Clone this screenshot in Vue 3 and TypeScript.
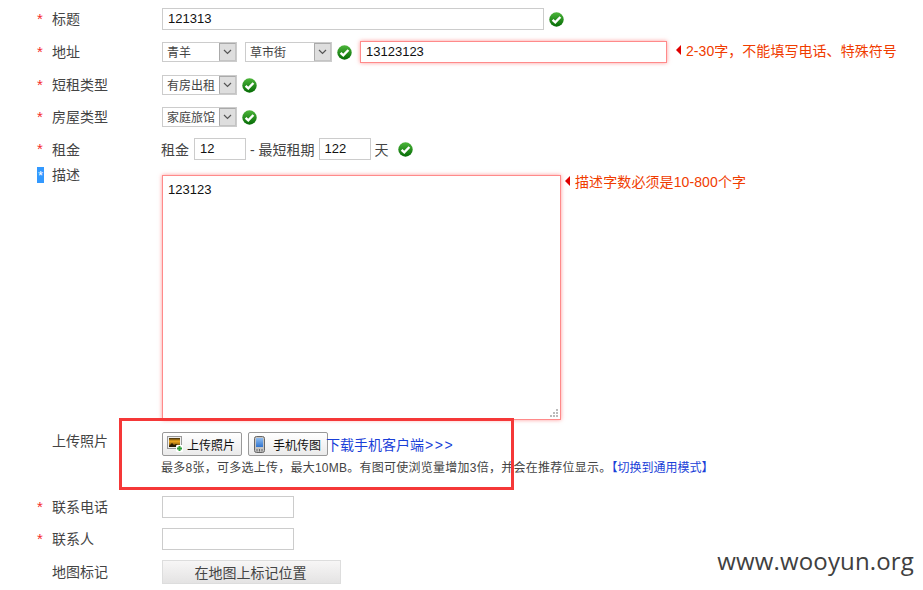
<script setup lang="ts">
const dots: [number, number][] = [
  [6, 0],
  [3, 3],
  [6, 3],
  [0, 6],
  [3, 6],
  [6, 6],
];
</script>

<template>
  <div class="page">
    <svg width="0" height="0" class="defs">
      <defs>
        <linearGradient id="okg" x1="0" y1="0" x2="0" y2="1">
          <stop offset="0" stop-color="#4cb53a" />
          <stop offset="1" stop-color="#056b05" />
        </linearGradient>
        <linearGradient id="scr" x1="0" y1="0" x2="0" y2="1">
          <stop offset="0" stop-color="#8fbdf0" />
          <stop offset="1" stop-color="#2f74d0" />
        </linearGradient>
        <linearGradient id="pic" x1="0" y1="0" x2="0" y2="1">
          <stop offset="0" stop-color="#3a2a0c" />
          <stop offset="0.35" stop-color="#f2aa1e" />
          <stop offset="1" stop-color="#5a3c08" />
        </linearGradient>
        <symbol id="ok" viewBox="0 0 15 15">
          <circle cx="7.5" cy="7.5" r="7.2" fill="url(#okg)" />
          <path d="M3.6 7.8 6.3 10.4 11.4 5" fill="none" stroke="#fff" stroke-width="2.4" />
        </symbol>
        <symbol id="chev" viewBox="0 0 9 6">
          <path d="M1 1l3.5 3.5L8 1" fill="none" stroke="#555" stroke-width="1.2" />
        </symbol>
      </defs>
    </svg>

    <div class="row r-title">
      <span class="star">*</span><span class="label">标题</span>
      <input class="ipt w-title" value="121313" />
      <svg class="ok"><use href="#ok" /></svg>
    </div>

    <div class="row r-addr">
      <span class="star">*</span><span class="label">地址</span>
      <div class="sel s1"><span class="sel-t">青羊</span><span class="arrow"><svg width="9" height="6"><use href="#chev" /></svg></span></div>
      <div class="sel s2"><span class="sel-t">草市街</span><span class="arrow"><svg width="9" height="6"><use href="#chev" /></svg></span></div>
      <svg class="ok"><use href="#ok" /></svg>
      <input class="ipt err w-addr" value="13123123" />
      <span class="tip tip-addr"><i class="tri"></i>2-30字，不能填写电话、特殊符号</span>
    </div>

    <div class="row r-sel">
      <span class="star">*</span><span class="label">短租类型</span>
      <div class="sel s3"><span class="sel-t">有房出租</span><span class="arrow"><svg width="9" height="6"><use href="#chev" /></svg></span></div>
      <svg class="ok"><use href="#ok" /></svg>
    </div>

    <div class="row r-sel">
      <span class="star">*</span><span class="label">房屋类型</span>
      <div class="sel s3"><span class="sel-t">家庭旅馆</span><span class="arrow"><svg width="9" height="6"><use href="#chev" /></svg></span></div>
      <svg class="ok"><use href="#ok" /></svg>
    </div>

    <div class="row r-rent">
      <span class="star">*</span><span class="label">租金</span>
      <span class="txt t-first">租金</span>
      <input class="ipt w-num" value="12" />
      <span class="txt t-mid">- 最短租期</span>
      <input class="ipt w-num" value="122" />
      <span class="txt t-day">天</span>
      <svg class="ok ok-rent"><use href="#ok" /></svg>
    </div>

    <div class="row r-desc">
      <span class="star star-sel">*</span><span class="label lab-desc">描述</span>
      <div class="ta-wrap">
        <textarea class="ta err">123123</textarea>
        <svg class="grip" width="8" height="8" viewBox="0 0 8 8">
          <rect v-for="(d, i) in dots" :key="i" :x="d[0]" :y="d[1]" width="2" height="2" fill="#bbb" />
        </svg>
      </div>
      <span class="tip tip-desc"><i class="tri"></i>描述字数必须是10-800个字</span>
    </div>

    <div class="row r-up">
      <span class="star blank"></span><span class="label">上传照片</span>
      <div class="up-body">
        <div class="up-btns">
          <button class="btn b1">
            <svg width="16" height="16" viewBox="0 0 16 16">
              <rect x="0.5" y="0.5" width="14" height="12" fill="#eee" stroke="#999" />
              <rect x="2" y="2" width="11" height="9" fill="url(#pic)" />
              <path d="M2 10 5 7l2 2 2-1 4 2v1H2z" fill="#2a1c04" />
              <rect x="9" y="9" width="7" height="7" rx="1" fill="#fff" />
              <path d="M12.5 10v5M10 12.5h5" stroke="#2f9e3a" stroke-width="2" />
            </svg>
            <span>上传照片</span>
          </button>
          <button class="btn b2">
            <svg width="11" height="17" viewBox="0 0 11 17">
              <rect x="0.5" y="0.5" width="10" height="16" rx="2" fill="#c4c4c4" stroke="#666" />
              <rect x="2" y="2" width="7" height="9" fill="url(#scr)" />
              <path d="M3 13v2.5M5.5 13v2.5M8 13v2.5" stroke="#666" stroke-width="1" />
            </svg>
            <span>手机传图</span>
          </button>
          <a class="dl">下载手机客户端<span class="gt">&gt;&gt;&gt;</span></a>
        </div>
        <div class="up-note">最多8张，可多选上传，最大10MB。有图可使浏览量增加3倍，并会在推荐位显示。<a class="sw">【切换到通用模式】</a></div>
      </div>
    </div>

    <div class="row r-plain">
      <span class="star">*</span><span class="label">联系电话</span>
      <input class="ipt w-contact" />
    </div>
    <div class="row r-plain">
      <span class="star">*</span><span class="label">联系人</span>
      <input class="ipt w-contact" />
    </div>
    <div class="row r-map">
      <span class="star blank"></span><span class="label">地图标记</span>
      <button class="map-btn">在地图上标记位置</button>
    </div>

    <div class="redbox"></div>
    <div class="mark">www.wooyun.org</div>
  </div>
</template>

<style>
html, body { margin: 0; padding: 0; background: #fff; }
</style>

<style scoped>
.page {
  position: relative;
  width: 923px;
  height: 590px;
  overflow: hidden;
  background: #fff;
  padding-top: 8px;
  box-sizing: border-box;
  font-family: "Liberation Sans", "Noto Sans CJK SC", sans-serif;
  font-size: 14px;
  color: #444;
}
.defs { position: absolute; }
.row { display: flex; align-items: center; padding-left: 37px; }
.star {
  width: 15px;
  flex: none;
  color: #f52a2a;
  font-size: 15px;
  line-height: 14px;
  height: 14px;
}
.star.blank { visibility: hidden; }
.label { width: 110px; flex: none; color: #444; line-height: 20px; }
.ipt {
  box-sizing: border-box;
  height: 22px;
  border: 1px solid #ccc;
  padding: 0 5px 2px;
  margin: 0;
  font: 13px "Liberation Sans", sans-serif;
  color: #111;
  background: #fff;
  outline: none;
}
.w-title { width: 382px; }
.ok { width: 15px; height: 15px; flex: none; margin-left: 5px; }
.r-title { height: 22px; margin-bottom: 11px; }
.r-addr { height: 22px; margin-bottom: 11px; }
.r-sel { height: 22px; margin-bottom: 10px; }
.r-rent { height: 22px; margin-bottom: 6px; }
.r-rent .label { margin-top: 1px; }

.sel {
  box-sizing: border-box;
  display: flex;
  height: 20px;
  border: 1px solid #ccc;
  background: #fff;
  font-size: 12px;
  color: #444;
  flex: none;
}
.sel-t { flex: 1; padding-left: 4px; line-height: 20px; white-space: nowrap; overflow: hidden; }
.arrow {
  width: 17px;
  flex: none;
  background: #dedede;
  border: 1px solid #aaa;
  border-right-color: #c4c4c4;
  border-bottom-color: #c4c4c4;
  box-sizing: border-box;
  display: flex;
  align-items: center;
  justify-content: center;
}
.s1 { width: 75px; }
.s2 { width: 87px; margin-left: 8px; }
.s3 { width: 75px; }
.w-addr { width: 307px; margin-left: 8px; }
.err {
  border-color: #ff8a8a;
  box-shadow: 0 0 4px rgba(255, 120, 120, 0.75);
}
.tip {
  color: #f03c00;
  font-size: 14px;
  line-height: 20px;
  white-space: nowrap;
  display: inline-flex;
  align-items: center;
  align-self: flex-start;
}
.tri {
  width: 0;
  height: 0;
  border-style: solid;
  border-width: 5px 5px 5px 0;
  border-color: transparent #e00000 transparent transparent;
  margin-right: 5px;
  position: relative;
  top: -1px;
}
.tip-addr { margin-left: 9px; letter-spacing: 0.05px; }
.txt { color: #444; white-space: nowrap; }
.t-first { margin-left: -1px; }
.w-num { width: 52px; margin-left: 5px; }
.t-mid { margin-left: 4px; margin-right: -1px; }
.t-day { margin-left: 4px; }
.ok-rent { margin-left: 9px; }

.r-desc { align-items: flex-start; height: 245px; margin-bottom: 10px; padding-top: 9px; }
.star-sel {
  background: #3399ff;
  color: #fff;
  width: 7px;
  height: 16px;
  margin-right: 8px;
  margin-top: -8px;
  overflow: hidden;
  line-height: 17px;
  font-size: 13px;
  text-align: center;
}
.lab-desc { margin-top: -10px; }
.ta-wrap { position: relative; width: 399px; height: 245px; flex: none; }
.ta {
  display: block;
  box-sizing: border-box;
  width: 399px;
  height: 245px;
  padding: 6px 5px;
  margin: 0;
  font: 13px "Liberation Sans", sans-serif;
  color: #111;
  outline: none;
  background: #fff;
  resize: none;
}
.grip { position: absolute; right: 3px; bottom: 3px; }
.tip-desc { margin-left: 4px; margin-top: -3px; letter-spacing: 0.1px; }

.r-up { align-items: flex-start; height: 66px; }
.r-up .label { margin-top: 1px; }
.up-btns { display: flex; align-items: center; height: 24px; margin-top: 2px; }
.btn {
  box-sizing: border-box;
  height: 24px;
  border: 1px solid #999;
  border-radius: 2px;
  background: linear-gradient(#fff, #eaeaea);
  padding: 0;
  display: flex;
  align-items: center;
  font: 12px "Liberation Sans", "Noto Sans CJK SC", sans-serif;
  color: #111;
}
.b1 { width: 80px; padding-left: 4px; gap: 4px; }
.b2 { width: 80px; margin-left: 6px; padding-left: 5px; gap: 8px; }
.dl { color: #1a3fd8; font-size: 14px; white-space: nowrap; margin-left: -2px; }
.gt { letter-spacing: 1.6px; margin-left: 1px; }
.up-note {
  font-size: 12px;
  line-height: 16px;
  margin: 4px 0 0 -1px;
  color: #444;
  white-space: nowrap;
  letter-spacing: 0.25px;
}
.sw { color: #1a3fd8; letter-spacing: 0; }

.r-plain { height: 22px; margin-bottom: 10px; }
.w-contact { width: 132px; }
.r-map { height: 24px; }
.map-btn {
  box-sizing: border-box;
  width: 179px;
  height: 24px;
  border: 1px solid #ddd;
  background: linear-gradient(#f7f6f6, #e4e3e3);
  font: 14px "Liberation Sans", "Noto Sans CJK SC", sans-serif;
  color: #444;
  padding: 0 2px 0 0;
}

.redbox {
  position: absolute;
  left: 119px;
  top: 418px;
  width: 395px;
  height: 72px;
  box-sizing: border-box;
  border: 3px solid #f53838;
  pointer-events: none;
}
.mark {
  position: absolute;
  right: 9px;
  bottom: 16px;
  font-family: "Open Sans", sans-serif;
  font-size: 24px;
  letter-spacing: 0.15px;
  line-height: 26px;
  color: #404040;
}
</style>
